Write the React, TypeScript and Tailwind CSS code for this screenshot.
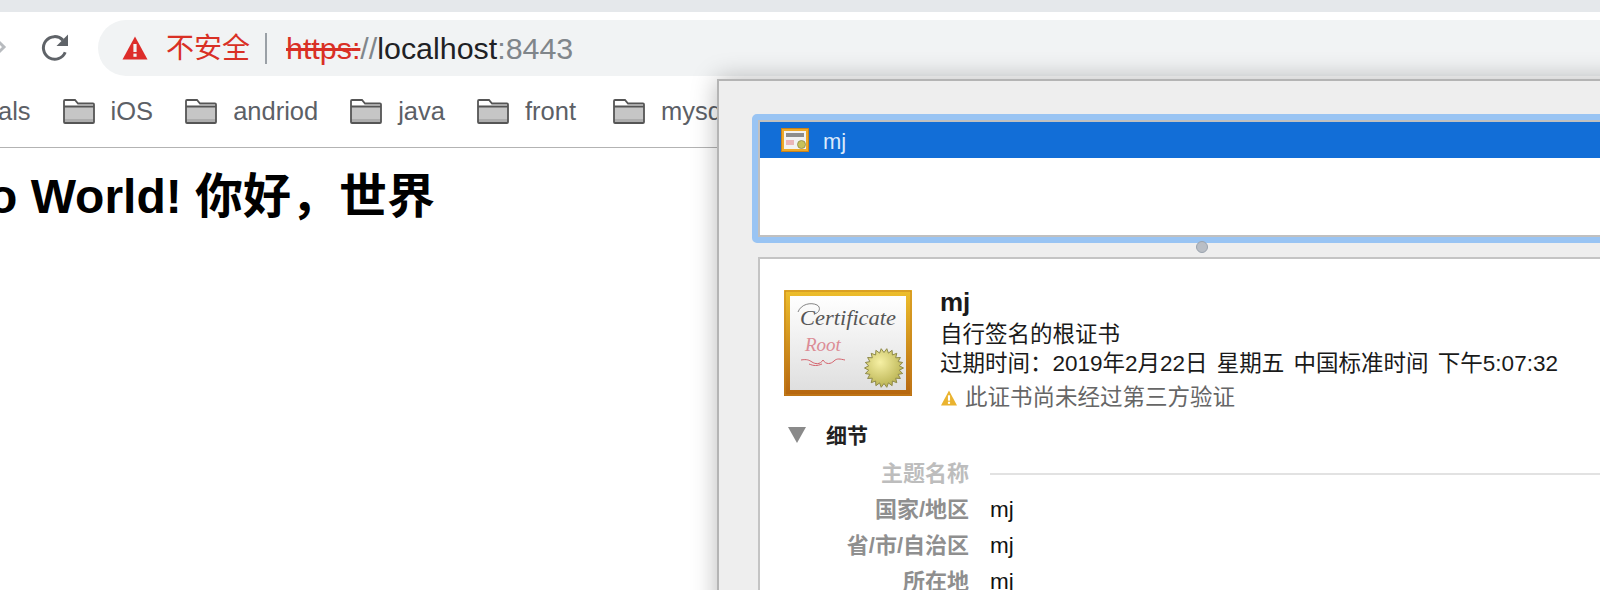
import React from "react";

const sans = "font-['Liberation_Sans','Noto_Sans_CJK_SC',sans-serif]";

function Folder() {
  return (
    <svg width="32" height="25" viewBox="0 0 32 25" className="shrink-0">
      <path d="M1 24V2a1 1 0 0 1 1-1h10l3 3.5h15a1 1 0 0 1 1 1V24z" fill="#fff" />
      <rect x="1" y="8" width="30" height="16" fill="#c6c6c6" />
      <rect x="1" y="20" width="30" height="4" fill="#adadad" />
      <path d="M1 23V2a1 1 0 0 1 1-1h10l3 3.5h15a1 1 0 0 1 1 1V23a1 1 0 0 1-1 1H2a1 1 0 0 1-1-1zM1 7.5h30" fill="none" stroke="#555555" strokeWidth="1.8" />
    </svg>
  );
}

function Bookmark({ name }: { name: string }) {
  return (
    <div className="flex items-center gap-[16px]">
      <Folder />
      <span className="text-[25.5px] leading-none text-[#5c6066]">{name}</span>
    </div>
  );
}

function BigCert() {
  const points = Array.from({ length: 44 }, (_, i) => {
    const r = i % 2 ? 15.5 : 19.5;
    const a = (i / 44) * Math.PI * 2;
    return `${(100 + r * Math.cos(a)).toFixed(1)},${(78 + r * Math.sin(a)).toFixed(1)}`;
  }).join(" ");
  return (
    <svg width="128" height="106" viewBox="0 0 128 106" className="shrink-0">
      <defs>
        <linearGradient id="bf" x1="0" y1="0" x2="0" y2="1">
          <stop offset="0" stopColor="#eebf2c" />
          <stop offset="1" stopColor="#b5650f" />
        </linearGradient>
        <linearGradient id="bp" x1="0" y1="0" x2="0" y2="1">
          <stop offset="0" stopColor="#ffffff" />
          <stop offset="1" stopColor="#dfdfdf" />
        </linearGradient>
        <radialGradient id="bs" cx="0.4" cy="0.35" r="0.8">
          <stop offset="0" stopColor="#f6f0a4" />
          <stop offset="1" stopColor="#aca540" />
        </radialGradient>
      </defs>
      <rect width="128" height="106" fill="url(#bf)" />
      <rect x="1" y="1" width="126" height="104" fill="none" stroke="#c8831c" strokeWidth="1" />
      <rect x="6" y="6" width="116" height="94" fill="url(#bp)" />
      <path d="M14 22c3-8 13-10 19-7c4 2 3 8-3 9" fill="none" stroke="#666" strokeWidth="0.8" />
      <text x="16" y="35" fontFamily="'Liberation Serif', serif" fontStyle="italic" fontSize="22" fill="#555" textLength="96" lengthAdjust="spacingAndGlyphs">
        Certificate
      </text>
      <text x="21" y="61" fontFamily="'Liberation Serif', serif" fontStyle="italic" fontSize="19" fill="#dc8c96">
        Root
      </text>
      <path d="M17 70c6-1 8 0 11 2s8 3 11-2c3 5 8 4 11 1s6-2 11-1M25 74c5 2 8 2 13 0" fill="none" stroke="#d4626c" strokeWidth="1" />
      <polygon fill="url(#bs)" stroke="#8f8a4a" strokeWidth="1" points={points} />
    </svg>
  );
}

function SmallCert() {
  return (
    <svg width="28" height="24" viewBox="0 0 28 24" className="shrink-0">
      <rect width="28" height="24" fill="#c8821c" />
      <rect x="1" y="1" width="26" height="22" fill="#eda92a" />
      <rect x="3" y="3" width="22" height="18" fill="#f2f2f2" />
      <rect x="5" y="5" width="18" height="4" fill="#8d8d8d" />
      <rect x="5" y="12" width="8" height="5" fill="#eab5b8" />
      <circle cx="20.5" cy="16.5" r="4" fill="#c6c15a" stroke="#8f8a4a" strokeWidth="0.8" />
    </svg>
  );
}

function Row({ label, value }: { label: string; value: string }) {
  return (
    <div className="flex h-[36px] items-center">
      <span className="w-[185px] text-right text-[22px] leading-none font-bold text-[#8f8f8f]">{label}</span>
      <span className="ml-[21px] text-[22.5px] leading-none text-[#111]">{value}</span>
    </div>
  );
}

export default function App() {
  return (
    <div className={`relative h-[590px] w-[1600px] overflow-hidden bg-white ${sans}`}>
      <div className="h-[12px] bg-[#e5e8eb]" />
      <div className="flex h-[64px] items-center pt-[8px]">
        <svg width="10" height="18" viewBox="0 0 10 18" className="-mt-[2px] shrink-0">
          <path d="M-4 1l8 8-8 8" fill="none" stroke="#b8bbbf" strokeWidth="3" />
        </svg>
        <svg width="30" height="30" viewBox="0 0 30 30" className="ml-[30px] shrink-0">
          <path d="M25.2 19.2A11.3 11.3 0 1 1 22.9 7.1" fill="none" stroke="#5f6368" strokeWidth="3" />
          <path d="M28 1.5V13H16.5z" fill="#5f6368" />
        </svg>
        <div className="ml-[28px] flex h-[56px] flex-1 items-center rounded-l-[28px] bg-[#f1f3f4] pl-[24px]">
          <svg width="26" height="24" viewBox="0 0 26 24" className="shrink-0">
            <path d="M13 0.5L25.5 23.5H0.5z" fill="#dd2c2a" />
            <rect x="11.4" y="8" width="3.2" height="8" fill="#f1f3f4" />
            <rect x="11.4" y="17.6" width="3.2" height="3.2" fill="#f1f3f4" />
          </svg>
          <span className="mt-[2px] ml-[18px] text-[28px] leading-none text-[#d93025]">不安全</span>
          <div className="ml-[15px] h-[31px] w-[2px] bg-[#9aa0a6]" />
          <span className="ml-[19px] text-[30.4px] leading-none">
            <span className="text-[#d93025] line-through">https</span>
            <span className="text-[#d93025] line-through">:</span>
            <span className="text-[#80868b]">//</span>
            <span className="text-[#202124]">localhost</span>
            <span className="text-[#80868b]">:8443</span>
          </span>
        </div>
      </div>
      <div className="flex h-[72px] items-center gap-[32px] border-b border-[#b3b3b3] whitespace-nowrap">
        <span className="-ml-[2px] text-[25.5px] leading-none text-[#5c6066]">als</span>
        <Bookmark name="iOS" />
        <Bookmark name="andriod" />
        <Bookmark name="java" />
        <Bookmark name="front" />
        <div className="ml-[5px]">
          <Bookmark name="mysql" />
        </div>
      </div>
      <h1 className="mt-[19px] text-[48px] leading-[60px] font-bold whitespace-nowrap text-black">
        <span className="-ml-[12px] inline-block">o World! 你好，世界</span>
      </h1>

      <div className="absolute top-[79px] left-[717px] h-[600px] w-[1000px] border-t-2 border-l-2 border-[#b4b4b4] bg-[#eeeeee] pt-[33px] pl-[33px] shadow-[0_0_24px_rgba(0,0,0,0.28)]">
        <div className="h-[129px] rounded-[5px] border-[6px] border-[#99c4f3]">
          <div className="h-full border-2 border-[#c0c0c0] bg-white">
            <div className="flex h-[36px] items-center bg-[#126ed7] pl-[21px]">
              <SmallCert />
              <span className="mt-[4px] ml-[14px] text-[22px] leading-none text-[#dbe9fb]">mj</span>
            </div>
          </div>
        </div>
        <div className="relative h-[14px]">
          <div className="absolute top-[-2px] left-[444px] h-[12px] w-[12px] rounded-full border border-[#9aa3ae] bg-[#b9bec5]" />
        </div>
        <div className="ml-[6px] h-[400px] border-2 border-[#c4c4c4] bg-white pt-[31px] pl-[24px]">
          <div className="flex">
            <BigCert />
            <div className="-mt-[6px] ml-[28px] flex flex-col">
              <span className="h-[36px] text-[26px] leading-[36px] font-bold text-[#1a1a1a]">mj</span>
              <span className="h-[29px] text-[22.5px] leading-[29px] text-[#1a1a1a]">自行签名的根证书</span>
              <span className="h-[30px] text-[22.5px] leading-[30px] whitespace-nowrap text-[#1a1a1a] [word-spacing:3px]">过期时间：2019年2月22日 星期五 中国标准时间 下午5:07:32</span>
              <span className="mt-[4px] flex h-[30px] items-center text-[22.5px] leading-[30px] text-[#666]">
                <svg width="18" height="16" viewBox="0 0 16 15" className="mr-[7px] shrink-0">
                  <path d="M8 0.5L15.5 14.5H0.5z" fill="#eab32f" />
                  <rect x="7" y="5" width="2" height="5" fill="#fff" />
                  <rect x="7" y="11" width="2" height="2" fill="#fff" />
                </svg>
                此证书尚未经过第三方验证
              </span>
            </div>
          </div>
          <div className="mt-[2px] flex h-[40px] items-center">
            <svg width="18" height="16" viewBox="0 0 18 16" className="ml-[4px] shrink-0">
              <path d="M0 0h18L9 16z" fill="#8a8a8a" />
            </svg>
            <span className="ml-[20px] text-[21px] leading-none font-bold text-[#222]">细节</span>
          </div>
          <div className="mt-[1px] flex h-[36px] items-center">
            <span className="w-[185px] text-right text-[22px] leading-none font-bold text-[#bdbdbd]">主题名称</span>
            <div className="ml-[21px] h-[2px] flex-1 bg-[#e2e2e2]" />
          </div>
          <Row label="国家/地区" value="mj" />
          <Row label="省/市/自治区" value="mj" />
          <Row label="所在地" value="mj" />
        </div>
      </div>
    </div>
  );
}
